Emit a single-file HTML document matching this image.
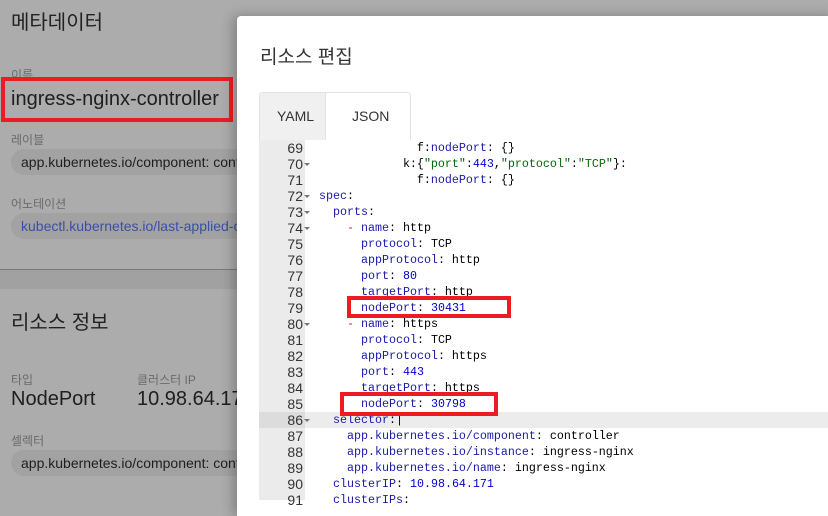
<!DOCTYPE html>
<html><head><meta charset="utf-8"><style>
*{margin:0;padding:0;box-sizing:border-box}
body{width:828px;height:500px;overflow:hidden;background:#acacac;font-family:"Liberation Sans","Noto Sans CJK KR",sans-serif;position:relative}
.a{position:absolute;white-space:nowrap}
.lbl{font-size:12px;color:#6a6a6a}
.chip{position:absolute;left:11px;width:240px;height:26px;border-radius:13px;background:#a2a2a2;font-size:14px;padding:5px 0 0 10px;color:#1e1e1e;white-space:nowrap;overflow:hidden}
.modal{position:absolute;left:237px;top:16px;width:600px;height:500px;background:#fff;border-radius:4px 0 0 0;box-shadow:-4px 0 12px rgba(0,0,0,.25)}
.gut{position:absolute;left:259px;top:140px;width:46px;height:360px;background:#ebebeb}
.code{position:absolute;left:305px;top:140px;font-family:"Liberation Mono",monospace;font-size:11.67px;line-height:16px;color:#000}
.ln{position:absolute;left:259px;top:140px;width:44px;font-family:"Liberation Sans",sans-serif;font-size:14px;line-height:16px;color:#333;text-align:right}
.ln div{position:relative}
.ln div.f::after{content:"";position:absolute;right:-7px;top:7px;border:3px solid transparent;border-top:3px solid #777;border-bottom:0}
.code div{padding-left:14px;white-space:pre}
.k{color:#1a1aa6}.n{color:#0000cd}.s{color:#036a07}.d{color:#c800a4}
.red{position:absolute;border:4px solid #ed1c24}
</style></head><body>
<div class="a" style="left:11px;top:6px;font-size:20px;color:#222">메타데이터</div>
<div class="a lbl" style="left:11px;top:66px">이름</div>
<div class="a" style="left:11px;top:88px;font-size:20px;color:#1e1e1e">ingress-nginx-controller</div>
<div class="a lbl" style="left:11px;top:131px">레이블</div>
<div class="chip" style="top:149px">app.kubernetes.io/component: controller</div>
<div class="a lbl" style="left:11px;top:195px">어노테이션</div>
<div class="chip" style="top:213px;color:#3a4fa5">kubectl.kubernetes.io/last-applied-configuration</div>
<div style="position:absolute;left:0;top:269px;width:240px;height:1px;background:#7a7a7a"></div>
<div style="position:absolute;left:0;top:270px;width:240px;height:19px;background:#a1a1a1"></div>
<div class="a" style="left:11px;top:306px;font-size:20px;color:#222">리소스 정보</div>
<div class="a lbl" style="left:11px;top:371px">타입</div>
<div class="a" style="left:11px;top:388px;font-size:20px;color:#1e1e1e">NodePort</div>
<div class="a lbl" style="left:137px;top:371px">클러스터 IP</div>
<div class="a" style="left:137px;top:388px;font-size:20px;color:#1e1e1e">10.98.64.171</div>
<div class="a lbl" style="left:11px;top:432px">셀렉터</div>
<div class="chip" style="top:450px">app.kubernetes.io/component: controller</div>
<div class="red" style="left:1px;top:77px;width:232px;height:45px"></div>

<div class="modal"></div>
<div class="a" style="left:260px;top:42px;font-size:19px;color:#333">리소스 편집</div>
<div style="position:absolute;left:259px;top:92px;width:152px;height:48px;border:1px solid #e2e2e2;border-bottom:0;border-radius:3px 3px 0 0;background:#fff"></div>
<div style="position:absolute;left:260px;top:93px;width:66px;height:47px;background:#f0f0f0;border-right:1px solid #e2e2e2"></div>
<div class="a" style="left:277px;top:108px;font-size:14px;color:#333">YAML</div>
<div class="a" style="left:352px;top:108px;font-size:14px;color:#333">JSON</div>
<div class="gut"></div>
<div style="position:absolute;left:259px;top:412px;width:46px;height:16px;background:#dcdcdc"></div>
<div style="position:absolute;left:305px;top:412px;width:523px;height:16px;background:#ececec"></div>
<div class="ln">
<div>69</div><div class="f">70</div><div>71</div><div class="f">72</div><div class="f">73</div><div class="f">74</div><div>75</div><div>76</div><div>77</div><div>78</div><div>79</div><div class="f">80</div><div>81</div><div>82</div><div>83</div><div>84</div><div>85</div><div class="f">86</div><div>87</div><div>88</div><div>89</div><div>90</div><div>91</div>
</div>
<div class="code">
<div>              f:<span class="k">nodePort</span>: {}</div>
<div>            k:{<span class="s">"port"</span>:<span class="n">443</span>,<span class="s">"protocol"</span>:<span class="s">"TCP"</span>}:</div>
<div>              f:<span class="k">nodePort</span>: {}</div>
<div><span class="k">spec</span>:</div>
<div>  <span class="k">ports</span>:</div>
<div>    <span class="d">-</span> <span class="k">name</span>: http</div>
<div>      <span class="k">protocol</span>: TCP</div>
<div>      <span class="k">appProtocol</span>: http</div>
<div>      <span class="k">port</span>: <span class="n">80</span></div>
<div>      <span class="k">targetPort</span>: http</div>
<div>      <span class="k">nodePort</span>: <span class="n">30431</span></div>
<div>    <span class="d">-</span> <span class="k">name</span>: https</div>
<div>      <span class="k">protocol</span>: TCP</div>
<div>      <span class="k">appProtocol</span>: https</div>
<div>      <span class="k">port</span>: <span class="n">443</span></div>
<div>      <span class="k">targetPort</span>: https</div>
<div>      <span class="k">nodePort</span>: <span class="n">30798</span></div>
<div>  <span class="k">selector</span>:|</div>
<div>    <span class="k">app.kubernetes.io/component</span>: controller</div>
<div>    <span class="k">app.kubernetes.io/instance</span>: ingress-nginx</div>
<div>    <span class="k">app.kubernetes.io/name</span>: ingress-nginx</div>
<div>  <span class="k">clusterIP</span>: <span class="n">10.98.64.171</span></div>
<div>  <span class="k">clusterIPs</span>:</div>
</div>
<div class="red" style="left:347px;top:296px;width:164px;height:22px"></div>
<div class="red" style="left:340px;top:392px;width:158px;height:24px"></div>
</body></html>
